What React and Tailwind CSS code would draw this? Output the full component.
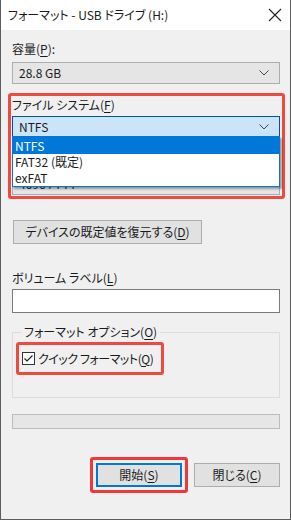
import React from 'react';

const font = { fontFamily: '"Noto Sans CJK JP", "Noto Sans", sans-serif' };

const Chevron = () => (
  <svg width="10" height="6" viewBox="0 0 10 6" className="text-[#444]">
    <polyline points="0.5,0.5 5,5 9.5,0.5" fill="none" stroke="currentColor" strokeWidth="1" />
  </svg>
);

// mnemonic label, e.g. 容量(P)
const Mn = ({ pre, k, post = '' }) => (
  <span className="whitespace-nowrap">
    {pre}(<span className="underline underline-offset-2">{k}</span>){post}
  </span>
);

const Combo = ({ value, active }) => (
  <div
    className={
      'flex h-[22px] w-[268px] items-center justify-between border pl-[6px] pr-[10px] text-[12px] ' +
      (active ? 'border-[#0054a6] bg-[#cce4f7]' : 'border-[#adadad] bg-[#e5e5e5]')
    }
  >
    <span>{value}</span>
    <Chevron />
  </div>
);

const App = () => {
  return (
    <div
      style={font}
      className="flex h-[520px] w-[291px] flex-col overflow-hidden border-x border-b border-[#5c5c5c] bg-[#f0f0f0] text-[12px] leading-[16px] text-[#1a1a1a] [font-feature-settings:'palt']"
    >
      {/* title bar */}
      <div className="flex h-[30px] shrink-0 items-center justify-between bg-white pl-[7px] pr-[8px]">
        <span className="text-[12px]">フォーマット - USB ドライブ (H:)</span>
        <svg width="14" height="14" viewBox="0 0 14 14">
          <path d="M1 1 L13 13 M13 1 L1 13" stroke="#222" strokeWidth="1.1" />
        </svg>
      </div>

      <div className="flex flex-col pl-[11px]">
        <div className="mt-[11px]">
          <Mn pre="容量" k="P" post=":" />
        </div>
        <div className="mt-[5px]">
          <Combo value="28.8 GB" />
        </div>

        {/* file system (highlighted) */}
        <div className="relative -ml-[4px] mt-[9px] w-[277px] rounded-[3px] border-[3px] border-[#ef4a3f] pb-[1px] pl-[1px]">
          <div className="mt-[1px]">
            <Mn pre="ファイル システム" k="F" />
          </div>
          <div className="mt-[3px]">
            <Combo value="NTFS" active />
          </div>
          <div className="mt-[8px] h-[16px] text-transparent">アロケーション ユニット サイズ(A)</div>
          <div className="mt-[11px]">
            <div className="flex h-[22px] w-[268px] items-center justify-between border border-[#adadad] bg-[#e5e5e5] pl-[6px] pr-[10px]">
              <span>4096 バイト</span>
              <Chevron />
            </div>
          </div>

          {/* open dropdown list */}
          <div className="absolute left-[1px] top-[40px] w-[268px] border border-[#0078d7] bg-white shadow-[2px_2px_2px_rgba(0,0,0,0.35)]">
            <div className="flex h-[17px] items-center bg-[#0078d7] pl-[2px] text-white">NTFS</div>
            <div className="flex h-[16px] items-center pl-[2px]">FAT32 (既定)</div>
            <div className="flex h-[16px] items-center pl-[2px]">exFAT</div>
          </div>
        </div>

        <button className="ml-[1px] mt-[21px] flex h-[24px] w-[189px] items-center justify-center border border-[#adadad] bg-[#e1e1e1]">
          <Mn pre="デバイスの既定値を復元する" k="D" />
        </button>

        <div className="mt-[26px]">
          <Mn pre="ボリューム ラベル" k="L" />
        </div>
        <div className="mt-[3px] h-[24px] w-[268px] border border-[#7a7a7a] bg-white" />

        {/* format options group */}
        <fieldset className="mt-[11px] h-[74px] w-[268px] border border-[#dcdcdc] pl-[3px]">
          <legend className="ml-[5px] px-[3px]">
            <Mn pre="フォーマット オプション" k="O" />
          </legend>
          <div className="mt-[2px] flex h-[33px] w-fit items-center rounded-[3px] border-[3px] border-[#ef4a3f] pl-[3px] pr-[8px]">
            <svg width="13" height="13" viewBox="0 0 13 13" className="shrink-0">
              <rect x="0.5" y="0.5" width="12" height="12" fill="white" stroke="#333" />
              <polyline points="2.5,6.5 5,9 10.5,3.5" fill="none" stroke="#222" strokeWidth="1.2" />
            </svg>
            <span className="ml-[3px] tracking-[-0.04em]">
              <Mn pre="クイック フォーマット" k="Q" />
            </span>
          </div>
        </fieldset>

        <div className="mt-[16px] h-[15px] w-[268px] border border-[#bcbcbc] bg-[#e6e6e6]" />

        <div className="mt-[28px] flex w-[268px] items-center justify-end gap-[6px]">
          <div className="rounded-[3px] border-[3px] border-[#f2363a] p-[3px]">
            <button className="flex h-[24px] w-[86px] items-center justify-center border-2 border-[#0078d7] bg-[#e1e1e1]">
              <Mn pre="開始" k="S" />
            </button>
          </div>
          <button className="flex h-[24px] w-[86px] items-center justify-center border border-[#adadad] bg-[#e1e1e1]">
            <Mn pre="閉じる" k="C" />
          </button>
        </div>
      </div>
    </div>
  );
};

export default App;
